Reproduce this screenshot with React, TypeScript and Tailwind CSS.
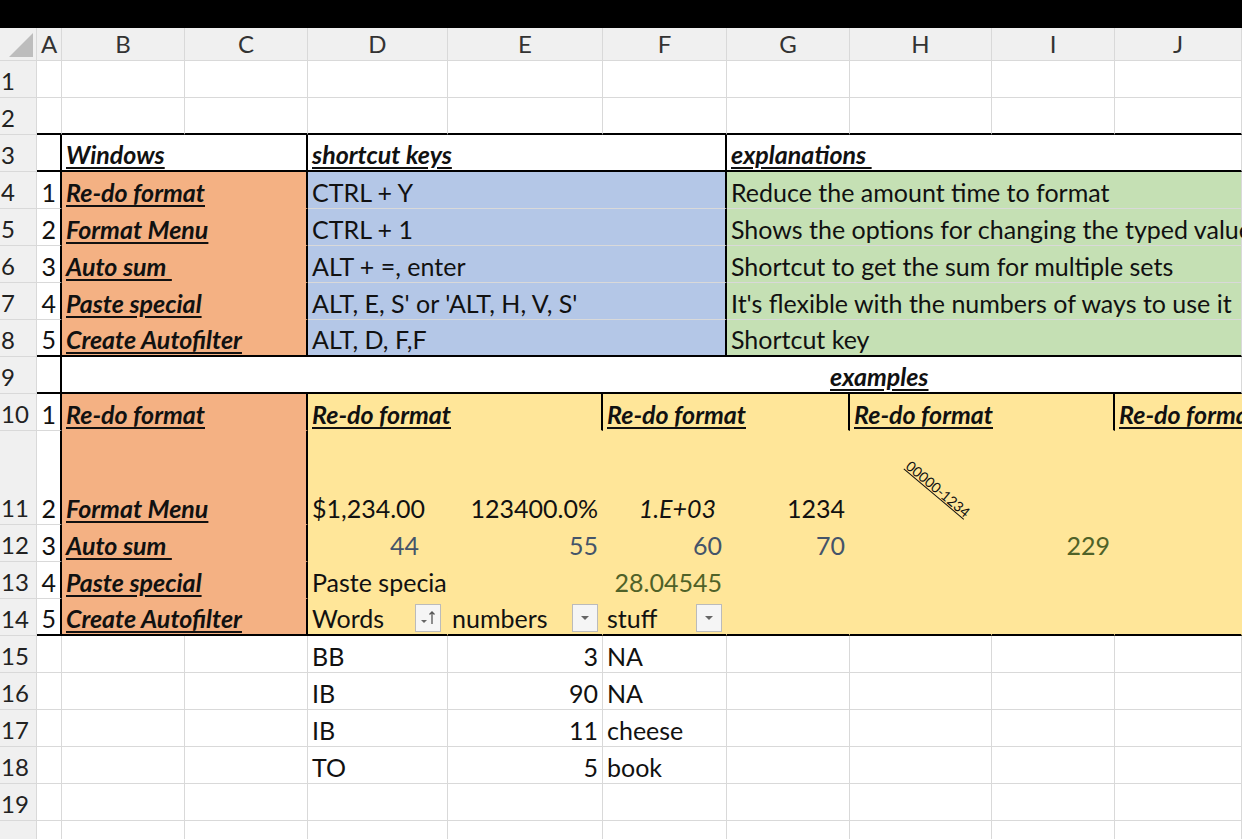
import React from "react";

const COLS = "grid-cols-[37px_25px_123px_123px_140px_155px_124px_123px_142px_123px_127px]";
const GL = "border-[#d9d9d9]";
const OR = "bg-[#f4b183]";
const BL = "bg-[#b4c7e7]";
const GR = "bg-[#c5e0b4]";
const YE = "bg-[#ffe699]";
const hdr = "font-bold italic underline underline-offset-[3px]";

type C = { s?: number; t?: React.ReactNode; c?: string };

function Row({ n, h = "h-[37px]", cells }: { n: number; h?: string; cells: C[] }) {
  return (
    <div className={`grid ${COLS} ${h}`}>
      <div className={`bg-[#f0f0f0] border-r border-b ${GL} flex items-end pl-[1px] pb-[1px] text-[24px] text-[#222]`}>{n}</div>
      {cells.map((x, i) => (
        <div
          key={i}
          style={{ gridColumn: `span ${x.s ?? 1} / span ${x.s ?? 1}` }}
          className={`relative border-r border-b ${GL} flex items-end pb-[1px] px-[4px] whitespace-nowrap overflow-visible ${x.c ?? ""}`}
        >
          {x.t}
        </div>
      ))}
    </div>
  );
}

function FBtn({ sort }: { sort?: boolean }) {
  return (
    <span className="ml-auto mb-[1px] w-[26px] h-[28px] border border-[#bbb] bg-[#f5f5f5] flex items-center justify-center text-[#666] shrink-0">
      {sort ? (
        <svg width="18" height="18" viewBox="0 0 18 18"><path d="M2 11h6l-3 3z" fill="#666"/><path d="M13 15V3M10.5 5.5 13 3l2.5 2.5" stroke="#555" strokeWidth="1.3" fill="none"/></svg>
      ) : (
        <svg width="10" height="6" viewBox="0 0 10 6"><path d="M1 1h8L5 5z" fill="#666"/></svg>
      )}
    </span>
  );
}

export default function App() {
  const empty10 = (): C[] => Array.from({ length: 10 }, () => ({}));
  const ob = `${OR} border-[#f4b183]`;
  const bb = `${BL} border-[#b4c7e7]`;
  const gb = `${GR} border-[#c5e0b4]`;
  const yb = `${YE} border-[#ffe699]`;
  const aCell = (t: string, last = false) => ({ t, c: `justify-end px-[2px] border-r-2 border-r-black ${last ? "border-b-2 border-b-black" : ""}` });
  const topRow = (): C[] => Array.from({ length: 10 }, () => ({ c: "border-b-2 border-b-black" }));

  return (
    <div className="w-[1242px] h-[839px] overflow-hidden bg-white text-[25px] leading-[30px] text-[#111]" style={{ fontFamily: "Lato, 'Open Sans', sans-serif" }}>
      <div className="h-[28px] bg-black" />
      <div className={`grid ${COLS} h-[33px] bg-[#f0f0f0] text-[#333] text-[24px]`}>
        <div className={`border-r border-b ${GL} flex items-end justify-end p-[3px]`}>
          <div className="w-0 h-0 border-l-[24px] border-l-transparent border-b-[24px] border-b-[#bdbdbd]" />
        </div>
        {["A", "B", "C", "D", "E", "F", "G", "H", "I", "J"].map((l) => (
          <div key={l} className={`border-r border-b ${GL} flex items-center justify-center`}>{l}</div>
        ))}
      </div>
      <Row n={1} cells={empty10()} />
      <Row n={2} cells={topRow()} />
      <Row n={3} cells={[
        { c: "border-r-2 border-r-black border-b-2 border-b-black" },
        { s: 2, t: <span className={hdr}>Windows</span>, c: "border-r-2 border-r-black border-b-2 border-b-black" },
        { s: 3, t: <span className={hdr}>shortcut keys</span>, c: "border-r-2 border-r-black border-b-2 border-b-black" },
        { s: 4, t: <span className={hdr}>explanations&nbsp;</span>, c: "border-b-2 border-b-black" },
      ]} />
      {[
        ["1", "Re-do format", "CTRL + Y", "Reduce the amount time to format"],
        ["2", "Format Menu", "CTRL + 1", "Shows the options for changing the typed value"],
        ["3", "Auto sum ", "ALT + =, enter", "Shortcut to get the sum for multiple sets"],
        ["4", "Paste special", "ALT, E, S' or 'ALT, H, V, S'", "It's flexible with the numbers of ways to use it"],
        ["5", "Create Autofilter", "ALT, D, F,F", "Shortcut key"],
      ].map((r, i) => {
        const last = i === 4;
        const bot = last ? "border-b-2 border-b-black" : "";
        return (
          <Row key={i} n={4 + i} cells={[
            aCell(r[0], last),
            { s: 2, t: <span className={hdr + " whitespace-pre"}>{r[1]}</span>, c: `${ob} border-r-2 border-r-black ${bot}` },
            { s: 3, t: r[2], c: `${bb} border-r-2 border-r-black ${bot}` },
            { s: 4, t: r[3], c: `${gb} ${bot} overflow-hidden` },
          ]} />
        );
      })}
      <Row n={9} cells={[
        { c: "border-r-2 border-r-black border-b-2 border-b-black" },
        { s: 9, t: <span className={`${hdr} ml-[764px]`}>examples</span>, c: "border-b-2 border-b-black px-0" },
      ]} />
      <Row n={10} cells={[
        aCell("1"),
        { s: 2, t: <span className={hdr}>Re-do format</span>, c: `${ob} border-r-2 border-r-black` },
        { s: 2, t: <span className={hdr}>Re-do format</span>, c: `${yb} border-r-2 border-r-black` },
        { s: 2, t: <span className={hdr}>Re-do format</span>, c: `${yb} border-r-2 border-r-black` },
        { s: 2, t: <span className={hdr}>Re-do format</span>, c: `${yb} border-r-2 border-r-black` },
        { t: <span className={hdr}>Re-do format</span>, c: `${yb} overflow-hidden` },
      ]} />
      <Row n={11} h="h-[94px]" cells={[
        aCell("2"),
        { s: 2, t: <span className={hdr}>Format Menu</span>, c: `${ob} border-r-2 border-r-black` },
        { t: "$1,234.00", c: yb },
        { t: "123400.0%", c: `${yb} justify-end` },
        { t: <span className="italic pr-[6px]">1.E+03</span>, c: `${yb} justify-end` },
        { t: "1234", c: `${yb} justify-end` },
        { t: <span className="absolute left-[58px] top-[26px] text-[14px] leading-none rotate-[40deg] origin-left underline line-through">00000-1234</span>, c: yb },
        { c: yb }, { c: yb },
      ]} />
      <Row n={12} cells={[
        aCell("3"),
        { s: 2, t: <span className={hdr + " whitespace-pre"}>Auto sum </span>, c: `${ob} border-r-2 border-r-black` },
        { t: "44", c: `${yb} justify-end text-[#44546a] pr-[28px]` },
        { t: "55", c: `${yb} justify-end text-[#44546a]` },
        { t: "60", c: `${yb} justify-end text-[#44546a]` },
        { t: "70", c: `${yb} justify-end text-[#44546a]` },
        { c: yb },
        { t: "229", c: `${yb} justify-end text-[#4f6228]` },
        { c: yb },
      ]} />
      <Row n={13} cells={[
        aCell("4"),
        { s: 2, t: <span className={hdr}>Paste special</span>, c: `${ob} border-r-2 border-r-black` },
        { t: "Paste special", c: yb },
        { c: yb },
        { t: "28.04545", c: `${yb} justify-end text-[#4f6228]` },
        { c: yb }, { c: yb }, { c: yb }, { c: yb },
      ]} />
      <Row n={14} cells={[
        aCell("5", true),
        { s: 2, t: <span className={hdr}>Create Autofilter</span>, c: `${ob} border-r-2 border-r-black border-b-2 border-b-black` },
        { t: <>Words<FBtn sort /></>, c: `${yb} border-b-2 border-b-black pr-[6px]` },
        { t: <>numbers<FBtn /></>, c: `${yb} border-b-2 border-b-black pr-[4px]` },
        { t: <>stuff<FBtn /></>, c: `${yb} border-b-2 border-b-black pr-[4px]` },
        { c: `${yb} border-b-2 border-b-black` },
        { c: `${yb} border-b-2 border-b-black` },
        { c: `${yb} border-b-2 border-b-black` },
        { c: `${yb} border-b-2 border-b-black` },
      ]} />
      {[
        ["BB", "3", "NA"],
        ["IB", "90", "NA"],
        ["IB", "11", "cheese"],
        ["TO", "5", "book"],
        ["", "", ""],
      ].map((r, i) => (
        <Row key={i} n={15 + i} cells={[
          {}, {}, {},
          { t: r[0] },
          { t: r[1], c: "justify-end" },
          { t: r[2] },
          {}, {}, {}, {},
        ]} />
      ))}
      <div className={`grid ${COLS} h-[20px]`}>
        <div className={`bg-[#f0f0f0] border-r ${GL}`} />
        {Array.from({ length: 10 }).map((_, i) => <div key={i} className={`border-r ${GL}`} />)}
      </div>
    </div>
  );
}
